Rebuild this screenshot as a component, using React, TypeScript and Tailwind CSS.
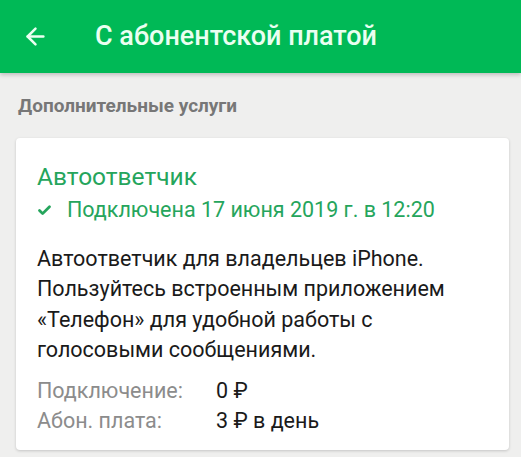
import { ArrowLeft, Check } from 'lucide-react'

const fees = [
    { label: 'Подключение:', value: '0 ₽' },
    { label: 'Абон. плата:', value: '3 ₽ в день' },
]

export default function App() {
    return (
        <div
            className="min-h-screen w-[521px] h-[457px] overflow-hidden bg-[#efefee]"
            style={{ fontFamily: 'Roboto, "Noto Sans", sans-serif' }}
        >
            {/* Toolbar */}
            <div className="h-[73px] bg-[#00b956] flex items-center shadow-[0_2px_4px_rgba(0,0,0,0.2)] relative">
                <div className="w-[95px] pl-[22px] flex items-center">
                    <ArrowLeft className="w-[27px] h-[27px] text-[#eafff1]" strokeWidth={2.2} />
                </div>
                <h1 className="text-[27px] font-medium text-[#eafff1] leading-none">
                    С абонентской платой
                </h1>
            </div>

            {/* Section */}
            <div className="px-[18px] pt-[22px] pb-[21px]">
                <h2 className="text-[19px] font-bold text-[#777777] leading-[22px]">
                    Дополнительные услуги
                </h2>
            </div>

            {/* Card */}
            <div className="mx-[16px] w-[493px] bg-white rounded-[4px] shadow-[0_1px_3px_rgba(0,0,0,0.18)] px-[21px] pt-[24px] pb-[14px]">
                <div className="text-[24.5px] text-[#25a55c] leading-[30px]">
                    Автоответчик
                </div>
                <div className="flex items-center text-[21.5px] text-[#25a55c] leading-[30px] mt-[3px]">
                    <Check className="w-[15px] h-[15px] mr-[15px]" strokeWidth={4.5} />
                    <span>Подключена 17 июня 2019 г. в 12:20</span>
                </div>
                <p className="text-[21.5px] text-[#1a1a1a] leading-[30.3px] mt-[19px]">
                    Автоответчик для владельцев iPhone.
                    <br />
                    Пользуйтесь встроенным приложением
                    <br />
                    «Телефон» для удобной работы с
                    <br />
                    голосовыми сообщениями.
                </p>
                <div className="mt-[11px]">
                    {fees.map((f) => (
                        <div key={f.label} className="flex text-[21.5px] leading-[30px]">
                            <span className="w-[179px] text-[#8c8c8c]">{f.label}</span>
                            <span className="text-[#1a1a1a]">{f.value}</span>
                        </div>
                    ))}
                </div>
            </div>
        </div>
    )
}
